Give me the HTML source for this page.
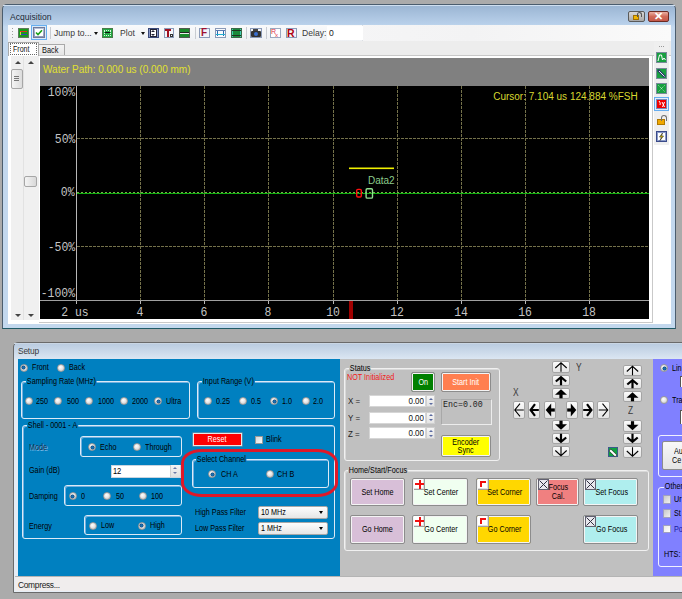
<!DOCTYPE html>
<html><head><meta charset="utf-8">
<style>
*{box-sizing:border-box;margin:0;padding:0}
html,body{width:682px;height:599px;overflow:hidden;background:#ababab;font-family:"Liberation Sans",sans-serif}
.a{position:absolute}
.t{position:absolute;white-space:nowrap;line-height:1}
/* setup condensed text */
.s{position:absolute;white-space:nowrap;line-height:1;font-size:8.6px;color:#000;transform:scaleX(0.84);transform-origin:0 0}
.sc{transform-origin:50% 0}
.grp{position:absolute;border:1px solid #e8f0f8;border-radius:3px}
.gt{position:absolute;white-space:nowrap;line-height:1;font-size:8.6px;padding:0 1px;transform:scaleX(0.84);transform-origin:0 0}
.rad{position:absolute;width:8px;height:8px;border-radius:50%;background:radial-gradient(circle at 40% 35%,#fff 0,#e6e6e6 45%,#bdbdbd 100%);border:1px solid #9a9a9a}
.rad.on::after{content:"";position:absolute;left:1.5px;top:1.5px;width:3px;height:3px;border-radius:50%;background:#1a6fb0;box-shadow:0 0 0 0.5px #0a3f6f}
.btn{position:absolute;border:1px solid #8a8a8a;border-radius:2px;box-shadow:inset 1px 1px 0 #fff,inset -1px -1px 0 #dcdcdc}
.ab{position:absolute;border:1px solid #9c9c9c;border-radius:2px;background:linear-gradient(#fafafa,#e6e6e6)}
</style></head><body>

<!-- ================= ACQUISITION WINDOW ================= -->
<div class="a" style="left:2px;top:4px;width:674px;height:325px;border:1px solid #4b5d6e;border-bottom-color:#1f5a66;border-radius:5px 5px 0 0;background:linear-gradient(#9ab4d2 0,#b8d0ea 19px,#c3d8ee 22px,#c3d8ee 100%)"></div>
<div class="a" style="left:3px;top:5px;width:672px;height:1px;background:#cfdff0"></div>
<div class="t" style="left:10px;top:13px;font-size:8.6px;color:#1e2a36">Acquisition</div>
<!-- lock + close buttons -->
<div class="a" style="left:628px;top:11px;width:17px;height:11px;border:1px solid #5a5a5a;border-radius:2px;background:linear-gradient(#d8d8d8,#a8a8a8)"></div>
<div class="a" style="left:633px;top:15px;width:6px;height:5px;background:#f0b400;border:1px solid #a07000"></div>
<div class="a" style="left:637px;top:12px;width:5px;height:5px;border:1px solid #555;border-bottom:none;border-radius:3px 3px 0 0"></div>
<div class="a" style="left:648px;top:11px;width:21px;height:11px;border:1px solid #6b2a22;border-radius:2px;background:linear-gradient(#eab0a4,#d06a58 50%,#c4584a)"></div>
<div class="t" style="left:654px;top:11px;font-size:11px;font-weight:bold;color:#fff">&#x2715;</div>

<!-- client -->
<div class="a" style="left:8px;top:25px;width:663px;height:299px;background:#fff"></div>
<!-- toolbar strip -->
<div class="a" style="left:8px;top:25px;width:663px;height:16px;background:linear-gradient(90deg,#f2f2f3,#f6f6f7 40%,#f3f3f4 70%,#fafafa)"></div>
<div class="a" style="left:8px;top:25px;width:355px;height:16px;background:linear-gradient(#f9fafb,#eef0f3);border-right:1px solid #dcdfe3"></div>
<div class="a" style="left:8px;top:41px;width:663px;height:15px;background:#ededed"></div>

<!-- toolbar grip -->
<div class="a" style="left:12px;top:28px;width:1px;height:10px;background:repeating-linear-gradient(#a0a0a0 0 1px,transparent 1px 3px)"></div>
<!-- icon1 -->
<div class="a" style="left:18px;top:28px;width:11px;height:10px;border:1px solid #5c7a5c;background:#1a9a1a"></div>
<div class="a" style="left:20px;top:31px;width:7px;height:1px;background:#e03020"></div>
<div class="a" style="left:21px;top:34px;width:6px;height:1px;background:#3040c0"></div>
<div class="a" style="left:20px;top:32px;width:1px;height:3px;background:#e0e040"></div>
<!-- icon2 highlighted -->
<div class="a" style="left:31px;top:25px;width:16px;height:15px;border:1px solid #66aef0;background:#dbeaf8"></div>
<div class="a" style="left:33px;top:27px;width:12px;height:11px;border:1px solid #707a9a;background:linear-gradient(#b9c3d8,#8e99b8)"></div>
<div class="a" style="left:35px;top:29px;width:8px;height:7px;background:#fff"></div>
<svg class="a" style="left:35px;top:29px" width="8" height="7"><path d="M1 3.5 L3 5.5 L7 1.2" stroke="#18a018" stroke-width="1.6" fill="none"/></svg>
<div class="a" style="left:50px;top:27px;width:1px;height:12px;background:#c8ccd2"></div>
<div class="t" style="left:54px;top:29px;font-size:8.6px;color:#3a3a3a">Jump to...</div>
<div class="a" style="left:94px;top:32px;width:0;height:0;border-left:2.5px solid transparent;border-right:2.5px solid transparent;border-top:3px solid #111"></div>
<!-- icon green dotted frame -->
<div class="a" style="left:102px;top:28px;width:11px;height:10px;border:1px solid #4a7a4a;background:#22aa44"></div>
<div class="a" style="left:104px;top:30px;width:7px;height:6px;border:1px dotted #dff5df"></div>
<div class="a" style="left:105px;top:32px;width:5px;height:1px;background:#111"></div>
<div class="t" style="left:120px;top:29px;font-size:8.6px;color:#3a3a3a">Plot</div>
<div class="a" style="left:141px;top:32px;width:0;height:0;border-left:2.5px solid transparent;border-right:2.5px solid transparent;border-top:3px solid #111"></div>
<!-- blue up/down -->
<div class="a" style="left:148px;top:28px;width:11px;height:10px;border:1px solid #3a4a7a;background:#8898c8"></div>
<div class="a" style="left:150px;top:29px;width:7px;height:8px;background:#fff;border:1px solid #223"></div>
<div class="a" style="left:151px;top:30px;width:0;height:0;border-left:2.5px solid transparent;border-right:2.5px solid transparent;border-bottom:2px solid #223"></div>
<div class="a" style="left:151px;top:34px;width:0;height:0;border-left:2.5px solid transparent;border-right:2.5px solid transparent;border-top:2px solid #223"></div>
<!-- T icon -->
<div class="a" style="left:164px;top:28px;width:10px;height:10px;border:1px solid #8a9ab8;background:#f4f6fa"></div>
<div class="a" style="left:165px;top:29px;width:6px;height:2px;background:#a01020"></div>
<div class="a" style="left:167px;top:29px;width:2px;height:8px;background:#a01020"></div>
<div class="a" style="left:170px;top:34px;width:3px;height:3px;border:1px solid #333"></div>
<!-- green stripes -->
<div class="a" style="left:179px;top:28px;width:11px;height:10px;border:1px solid #505a50;background:#e8f0e8"></div>
<div class="a" style="left:180px;top:29px;width:9px;height:3px;background:#1a8a2a"></div>
<div class="a" style="left:180px;top:34px;width:9px;height:3px;background:#1a8a2a"></div>
<div class="a" style="left:180px;top:32px;width:9px;height:1px;background:#222"></div>
<div class="a" style="left:195px;top:27px;width:1px;height:12px;background:#c8ccd2"></div>
<!-- F icon -->
<div class="a" style="left:199px;top:28px;width:11px;height:10px;border:1px solid #8a9ab8;background:#f2f4f8"></div>
<div class="t" style="left:201px;top:28px;font-size:10px;font-weight:bold;color:#a01030">F</div>
<!-- blue frame -->
<div class="a" style="left:215px;top:28px;width:11px;height:10px;border:1px solid #8a9ab8;background:#f8fafc"></div>
<div class="a" style="left:217px;top:30px;width:7px;height:6px;border-left:1px solid #2a6ab0;border-right:1px solid #2a6ab0"></div>
<div class="a" style="left:216px;top:34px;width:9px;height:1px;background:#20b0d0"></div>
<div class="a" style="left:216px;top:30px;width:9px;height:1px;background:#5a7ab0"></div>
<!-- green grid -->
<div class="a" style="left:231px;top:28px;width:11px;height:10px;border:1px solid #3a6a4a;background:#1a8a3a"></div>
<div class="a" style="left:232px;top:29px;width:9px;height:8px;border:1px solid #40d0b0;border-width:0 1px"></div>
<div class="a" style="left:232px;top:30px;width:9px;height:6px;border:1px solid #203020;border-width:1px 0"></div>
<div class="a" style="left:246px;top:27px;width:1px;height:12px;background:#c8ccd2"></div>
<!-- camera -->
<div class="a" style="left:250px;top:28px;width:12px;height:10px;border:1px solid #8a9ab8;background:#eef1f6"></div>
<div class="a" style="left:251px;top:31px;width:10px;height:6px;background:#333;border-radius:1px"></div>
<div class="a" style="left:253px;top:29px;width:5px;height:2px;background:#444"></div>
<div class="a" style="left:254px;top:32px;width:4px;height:4px;border-radius:50%;background:#3a70d0"></div>
<div class="a" style="left:266px;top:27px;width:1px;height:12px;background:#c8ccd2"></div>
<!-- Rx -->
<div class="a" style="left:270px;top:28px;width:11px;height:10px;border:1px solid #9aa8c0;background:#fff"></div>
<div class="t" style="left:271px;top:28px;font-size:7px;color:#e03040">R</div>
<div class="t" style="left:275px;top:32px;font-size:6px;color:#e03040">x</div>
<!-- R -->
<div class="a" style="left:286px;top:28px;width:11px;height:10px;border:1px solid #8a9ab8;background:#f2f4f8"></div>
<div class="t" style="left:287px;top:28px;font-size:10.5px;font-weight:bold;color:#b00010">R</div>
<div class="t" style="left:302px;top:29px;font-size:8.6px;color:#3a3a3a">Delay:</div>
<div class="a" style="left:327px;top:26px;width:36px;height:14px;background:#fff"></div>
<div class="t" style="left:329px;top:29px;font-size:8.6px;color:#222">0</div>

<!-- tabs -->
<div class="a" style="left:8px;top:55px;width:663px;height:1px;background:#c9c9c9"></div>
<div class="a" style="left:38px;top:44px;width:27px;height:12px;border:1px solid #a9a9a9;border-bottom:none;background:linear-gradient(#f4f4f4,#e4e4e4)"></div>
<div class="t" style="left:42px;top:45.5px;font-size:8.8px;color:#111;transform:scaleX(0.84);transform-origin:0 0">Back</div>
<div class="a" style="left:8px;top:42px;width:31px;height:14px;border:1px solid #a9a9a9;border-bottom:none;background:#fff"></div>
<div class="a" style="left:10px;top:43px;width:27px;height:12px;border:1px dotted #6a6a6a"></div>
<div class="t" style="left:13px;top:45px;font-size:8.8px;color:#111;transform:scaleX(0.8);transform-origin:0 0">Front</div>

<!-- scroll columns -->
<div class="a" style="left:8px;top:56px;width:32px;height:265px;background:#fff"></div>
<div class="a" style="left:11px;top:56px;width:13px;height:264px;background:#f0f0f0;border-right:1px solid #e2e2e2"></div>
<div class="a" style="left:24px;top:56px;width:15px;height:264px;background:#f0f0f0"></div>
<div class="a" style="left:15px;top:61px;width:0;height:0;border-left:3px solid transparent;border-right:3px solid transparent;border-bottom:3px solid #444"></div>
<div class="a" style="left:28px;top:61px;width:0;height:0;border-left:3px solid transparent;border-right:3px solid transparent;border-bottom:3px solid #444"></div>
<div class="a" style="left:15px;top:314px;width:0;height:0;border-left:3px solid transparent;border-right:3px solid transparent;border-top:3px solid #444"></div>
<div class="a" style="left:28px;top:314px;width:0;height:0;border-left:3px solid transparent;border-right:3px solid transparent;border-top:3px solid #444"></div>
<div class="a" style="left:11px;top:69px;width:12px;height:20px;border:1px solid #a6a6a6;border-radius:2px;background:linear-gradient(90deg,#f4f4f4,#dcdcdc)"></div>
<div class="a" style="left:14px;top:76px;width:5px;height:6px;background:repeating-linear-gradient(#777 0 1px,transparent 1px 2px)"></div>
<div class="a" style="left:24px;top:176px;width:13px;height:11px;border:1px solid #a6a6a6;border-radius:2px;background:linear-gradient(90deg,#f4f4f4,#d8d8d8)"></div>

<!-- plot frame -->
<div class="a" style="left:39px;top:55px;width:614px;height:268px;border:1px solid #c9c9c9;border-left:none;background:#fff"></div>
<div class="a" style="left:40px;top:58px;width:609px;height:28px;background:#808080"></div>
<div class="a" style="left:40px;top:86px;width:609px;height:233px;background:#000;overflow:hidden">
 <svg width="609" height="233" style="position:absolute;left:0;top:0">
  <g stroke="#74714a" stroke-width="1" stroke-dasharray="3,1">
   <line x1="100.5" y1="0" x2="100.5" y2="214"/>
   <line x1="164.5" y1="0" x2="164.5" y2="214"/>
   <line x1="228.5" y1="0" x2="228.5" y2="214"/>
   <line x1="293.5" y1="0" x2="293.5" y2="214"/>
   <line x1="357.5" y1="0" x2="357.5" y2="214"/>
   <line x1="421.5" y1="0" x2="421.5" y2="214"/>
   <line x1="485.5" y1="0" x2="485.5" y2="214"/>
   <line x1="549.5" y1="0" x2="549.5" y2="214"/>
   <line x1="37" y1="52.5" x2="609" y2="52.5"/>
   <line x1="37" y1="160.5" x2="609" y2="160.5"/>
  </g>
  <line x1="37" y1="106.5" x2="609" y2="106.5" stroke="#78b048" stroke-width="1" stroke-dasharray="2,2"/>
  <line x1="37" y1="107.5" x2="609" y2="107.5" stroke="#10b010" stroke-width="1"/>
  <line x1="36.5" y1="0" x2="36.5" y2="215" stroke="#b8b8b8" stroke-width="1"/>
  <line x1="0" y1="214.5" x2="609" y2="214.5" stroke="#a0a0a0" stroke-width="1"/>
  <g stroke="#b8b8b8" stroke-width="1">
   <line x1="36.5" y1="215" x2="36.5" y2="218"/>
   <line x1="100.5" y1="215" x2="100.5" y2="218"/>
   <line x1="164.5" y1="215" x2="164.5" y2="218"/>
   <line x1="228.5" y1="215" x2="228.5" y2="218"/>
   <line x1="293.5" y1="215" x2="293.5" y2="218"/>
   <line x1="357.5" y1="215" x2="357.5" y2="218"/>
   <line x1="421.5" y1="215" x2="421.5" y2="218"/>
   <line x1="485.5" y1="215" x2="485.5" y2="218"/>
   <line x1="549.5" y1="215" x2="549.5" y2="218"/>
  </g>
  <rect x="309" y="215" width="4" height="18" fill="#a00000"/>
  <rect x="309" y="81.5" width="45" height="1.6" fill="#f0f000"/>
  <rect x="316.7" y="103.4" width="4.6" height="7.6" rx="1.2" fill="none" stroke="#ff1010" stroke-width="1.4"/>
  <rect x="326.1" y="102.80000000000001" width="6.4" height="9.3" rx="1.2" fill="none" stroke="#90e090" stroke-width="1.4"/>
 </svg>
 <div class="t" style="left:328px;top:89.5px;font-size:10px;color:#8ccc8c">Data2</div>
 <div class="t" style="left:453.2px;top:5.799999999999997px;font-size:10px;color:#d8d830">Cursor: 7.104 us 124.884 %FSH</div>
 <div class="t" style="font-family:'Liberation Mono',monospace;font-size:13px;color:#c4c4c4;transform:scaleX(0.88);transform-origin:100% 0;right:574px;top:0.4px">100%</div>
 <div class="t" style="font-family:'Liberation Mono',monospace;font-size:13px;color:#c4c4c4;transform:scaleX(0.88);transform-origin:100% 0;right:574px;top:46.7px">50%</div>
 <div class="t" style="font-family:'Liberation Mono',monospace;font-size:13px;color:#c4c4c4;transform:scaleX(0.88);transform-origin:100% 0;right:574px;top:99.5px">0%</div>
 <div class="t" style="font-family:'Liberation Mono',monospace;font-size:13px;color:#c4c4c4;transform:scaleX(0.88);transform-origin:100% 0;right:574px;top:154.7px">-50%</div>
 <div class="t" style="font-family:'Liberation Mono',monospace;font-size:13px;color:#c4c4c4;transform:scaleX(0.88);transform-origin:100% 0;right:574px;top:200.5px">-100%</div>
 <div class="t" style="font-family:'Liberation Mono',monospace;font-size:13px;color:#c4c4c4;transform:scaleX(0.88);transform-origin:50% 0;left:-24.8px;width:120px;text-align:center;top:219.9px">2 us</div>
 <div class="t" style="font-family:'Liberation Mono',monospace;font-size:13px;color:#c4c4c4;transform:scaleX(0.88);transform-origin:50% 0;left:39.7px;width:120px;text-align:center;top:219.9px">4</div>
 <div class="t" style="font-family:'Liberation Mono',monospace;font-size:13px;color:#c4c4c4;transform:scaleX(0.88);transform-origin:50% 0;left:103.7px;width:120px;text-align:center;top:219.9px">6</div>
 <div class="t" style="font-family:'Liberation Mono',monospace;font-size:13px;color:#c4c4c4;transform:scaleX(0.88);transform-origin:50% 0;left:167.7px;width:120px;text-align:center;top:219.9px">8</div>
 <div class="t" style="font-family:'Liberation Mono',monospace;font-size:13px;color:#c4c4c4;transform:scaleX(0.88);transform-origin:50% 0;left:232.7px;width:120px;text-align:center;top:219.9px">10</div>
 <div class="t" style="font-family:'Liberation Mono',monospace;font-size:13px;color:#c4c4c4;transform:scaleX(0.88);transform-origin:50% 0;left:296.7px;width:120px;text-align:center;top:219.9px">12</div>
 <div class="t" style="font-family:'Liberation Mono',monospace;font-size:13px;color:#c4c4c4;transform:scaleX(0.88);transform-origin:50% 0;left:360.7px;width:120px;text-align:center;top:219.9px">14</div>
 <div class="t" style="font-family:'Liberation Mono',monospace;font-size:13px;color:#c4c4c4;transform:scaleX(0.88);transform-origin:50% 0;left:424.7px;width:120px;text-align:center;top:219.9px">16</div>
 <div class="t" style="font-family:'Liberation Mono',monospace;font-size:13px;color:#c4c4c4;transform:scaleX(0.88);transform-origin:50% 0;left:488.7px;width:120px;text-align:center;top:219.9px">18</div>
</div>
<div class="t" style="left:43px;top:64.5px;font-size:10px;color:#e0e030">Water Path: 0.000 us (0.000 mm)</div>

<!-- right toolbar -->
<div class="a" style="left:654px;top:42px;width:15px;height:103px;background:#efefef"></div>
<div class="a" style="left:659px;top:46px;width:6px;height:1px;background:repeating-linear-gradient(90deg,#999 0 1px,transparent 1px 2px)"></div>


<!-- right toolbar icons -->
<div class="a" style="left:656px;top:52px;width:11px;height:11px;border:1px solid #7a8a9a;background:#18a040"></div>
<svg class="a" style="left:656px;top:52px" width="11" height="11"><path d="M2 9 L3.5 3 L5.5 3 L6.5 8 L8 6 L9.5 8" stroke="#fff" stroke-width="1" fill="none"/></svg>
<div class="a" style="left:656px;top:67.5px;width:11px;height:11px;border:1px solid #7a8a9a;background:#18a040"></div>
<svg class="a" style="left:656px;top:67.5px" width="11" height="11"><path d="M2 2 L9 9" stroke="#2a3a6a" stroke-width="2.5"/><path d="M3 3 L8.5 8.5" stroke="#e8e8f0" stroke-width="1"/></svg>
<div class="a" style="left:656px;top:83px;width:11px;height:11px;border:1px solid #7a8a9a;background:#18a040"></div>
<svg class="a" style="left:656px;top:83px" width="11" height="11"><path d="M2.5 2.5 L8.5 8.5 M8.5 2.5 L2.5 8.5" stroke="#c8f0c8" stroke-width="1" stroke-dasharray="1,1"/></svg>
<div class="a" style="left:654px;top:97px;width:15px;height:14px;border:1px solid #66aef0;background:#e4eefa"></div>
<div class="a" style="left:656px;top:99px;width:11px;height:10px;border:1px solid #7a8ab8;background:#f00000"></div>
<svg class="a" style="left:656px;top:99px" width="11" height="10"><path d="M3 2 Q5 4 4 6 M6 3 L8.5 8 M6.5 8 L8.5 3" stroke="#fff" stroke-width="1" fill="none"/></svg>
<div class="a" style="left:657px;top:119px;width:8px;height:6px;background:#f0a800;border:1px solid #b07800"></div>
<div class="a" style="left:661px;top:114.5px;width:6px;height:6px;border:1.5px solid #707070;border-bottom:none;border-radius:3px 3px 0 0"></div>
<div class="a" style="left:656px;top:130.5px;width:11px;height:11px;border:1px solid #3a4a8a;background:#fff;box-shadow:inset 0 0 0 1px #8a9ac8"></div>
<svg class="a" style="left:656px;top:130.5px" width="11" height="11"><path d="M6.5 2 L3.5 6 L5.5 6 L4 9.5 L7.5 5 L5.5 5 Z" fill="#f0d000" stroke="#222" stroke-width="0.6"/></svg>
<!-- ================= SETUP WINDOW ================= -->
<div class="a" style="left:13px;top:342px;width:680px;height:251px;border:1px solid #6a6a6a;border-radius:5px 5px 0 0;background:linear-gradient(#b8cadf 0,#dbe6f2 16px,#e4ecf5 17px,#e4ecf5 100%)"></div>
<div class="a" style="left:14px;top:343px;width:668px;height:1px;background:#c9d6e4"></div>
<div class="t" style="left:18px;top:347px;font-size:8.4px;letter-spacing:-0.2px;color:#3a3a3a">Setup</div>
<!-- status bar -->
<div class="a" style="left:15px;top:576px;width:667px;height:15px;background:#f0eded;border-top:1px solid #b4b4b4"></div>
<div class="a" style="left:14px;top:591px;width:668px;height:1px;background:#e6eef6"></div>
<div class="t" style="left:18px;top:580.5px;font-size:8.4px;letter-spacing:-0.3px;color:#222">Compress...</div>
<!-- panels -->
<div class="a" style="left:18px;top:359px;width:322px;height:217px;background:#0080c0"></div>
<div class="a" style="left:340px;top:359px;width:313px;height:217px;background:#c0c0c0"></div>
<div class="a" style="left:653px;top:359px;width:29px;height:217px;background:#8080ff"></div>
<!-- blue panel content -->
<div class="rad on" style="left:19.9px;top:363.9px"></div>
<div class="s" style="left:31.7px;top:363.4px;">Front</div>
<div class="rad" style="left:56.6px;top:363.9px"></div>
<div class="s" style="left:68.6px;top:363.4px;">Back</div>
<div class="grp" style="left:21.0px;top:380.5px;width:169.4px;height:38.1px;border-color:#dceaf6;box-shadow:inset 1px 1px 0 #6fb0e0"></div>
<div class="gt" style="left:25.9px;top:376.8px;background:#0080c0">Sampling Rate (MHz)</div>
<div class="rad" style="left:24.6px;top:397.2px"></div>
<div class="s" style="left:36.4px;top:396.8px;">250</div>
<div class="rad" style="left:54.4px;top:397.2px"></div>
<div class="s" style="left:66.5px;top:396.8px;">500</div>
<div class="rad" style="left:85.2px;top:397.2px"></div>
<div class="s" style="left:97.5px;top:396.8px;">1000</div>
<div class="rad" style="left:119.9px;top:397.2px"></div>
<div class="s" style="left:132.0px;top:396.8px;">2000</div>
<div class="rad on" style="left:154.2px;top:397.2px"></div>
<div class="s" style="left:166.0px;top:396.8px;">Ultra</div>
<div class="grp" style="left:196.8px;top:380.5px;width:137.8px;height:38.4px;border-color:#dceaf6;box-shadow:inset 1px 1px 0 #6fb0e0"></div>
<div class="gt" style="left:201.5px;top:376.8px;background:#0080c0">Input Range (V)</div>
<div class="rad" style="left:203.7px;top:397.4px"></div>
<div class="s" style="left:216.0px;top:397.0px;">0.25</div>
<div class="rad" style="left:239.4px;top:397.4px"></div>
<div class="s" style="left:251.0px;top:397.0px;">0.5</div>
<div class="rad on" style="left:270.0px;top:397.4px"></div>
<div class="s" style="left:282.0px;top:397.0px;">1.0</div>
<div class="rad" style="left:301.5px;top:397.4px"></div>
<div class="s" style="left:313.2px;top:397.0px;">2.0</div>
<div class="grp" style="left:21.6px;top:425.0px;width:313.3px;height:114.2px;border-color:#dceaf6;box-shadow:inset 1px 1px 0 #6fb0e0"></div>
<div class="gt" style="left:26.9px;top:421.3px;background:#0080c0">Shell - 0001 - A</div>
<div class="s" style="left:28.9px;top:442.8px;color:#15324e;text-shadow:1px 1px 0 #86bce6">Mode</div>
<div class="grp" style="left:80.3px;top:435.5px;width:101.7px;height:21.3px;border-color:#dceaf6;box-shadow:inset 1px 1px 0 #6fb0e0"></div>
<div class="rad on" style="left:88.1px;top:443.0px"></div>
<div class="s" style="left:99.6px;top:442.8px;">Echo</div>
<div class="rad" style="left:133.0px;top:443.0px"></div>
<div class="s" style="left:145.4px;top:442.8px;">Through</div>
<div class="s" style="left:28.9px;top:465.8px;">Gain (dB)</div>
<div class="a" style="left:110.5px;top:464.5px;width:70px;height:13px;background:#fff;border:1px solid #c8d4e0"></div>
<div class="s" style="left:112.5px;top:466.8px;font-size:9px;letter-spacing:-0.3px">12</div>
<div class="a" style="left:170px;top:465px;width:10px;height:12px;background:linear-gradient(#f4f4f4,#e0e0e0);border-left:1px solid #d0d0d0"></div>
<div class="a" style="left:173px;top:467px;border-left:2px solid transparent;border-right:2px solid transparent;border-bottom:2px solid #6a7aa8"></div>
<div class="a" style="left:173px;top:472px;border-left:2px solid transparent;border-right:2px solid transparent;border-top:2px solid #6a7aa8"></div>
<div class="s" style="left:28.7px;top:491.8px;">Damping</div>
<div class="grp" style="left:63.8px;top:485.1px;width:117.9px;height:21.3px;border-color:#dceaf6;box-shadow:inset 1px 1px 0 #6fb0e0"></div>
<div class="rad on" style="left:68.5px;top:492.0px"></div>
<div class="s" style="left:81.0px;top:491.8px;">0</div>
<div class="rad" style="left:103.3px;top:492.0px"></div>
<div class="s" style="left:115.8px;top:491.8px;">50</div>
<div class="rad" style="left:139.0px;top:492.0px"></div>
<div class="s" style="left:150.9px;top:491.8px;">100</div>
<div class="s" style="left:28.7px;top:521.5px;">Energy</div>
<div class="grp" style="left:84.1px;top:514.5px;width:97.6px;height:20.7px;border-color:#dceaf6;box-shadow:inset 1px 1px 0 #6fb0e0"></div>
<div class="rad" style="left:89.4px;top:521.5px"></div>
<div class="s" style="left:100.8px;top:521.3px;">Low</div>
<div class="rad on" style="left:137.6px;top:521.5px"></div>
<div class="s" style="left:149.6px;top:521.3px;">High</div>
<div class="a" style="left:192.5px;top:432.5px;width:49px;height:13px;background:#ff0000;border:1px solid #e8e8e8;box-shadow:0 0 0 0.5px #9a9a9a"></div>
<div class="s" style="left:193px;width:48px;text-align:center;transform-origin:50% 0;top:434.8px;color:#fff">Reset</div>
<div class="a" style="left:254.5px;top:435.5px;width:8.5px;height:8.5px;background:linear-gradient(135deg,#d8d8d8,#fafafa);border:1px solid #9a9a9a"></div>
<div class="s" style="left:266.0px;top:435.3px;">Blink</div>
<div class="grp" style="left:192.0px;top:458.9px;width:136.6px;height:28.9px;border-color:#dceaf6;box-shadow:inset 1px 1px 0 #6fb0e0"></div>
<div class="gt" style="left:196.4px;top:455.2px;background:#0080c0">Select Channel</div>
<div class="rad on" style="left:208.4px;top:470.4px"></div>
<div class="s" style="left:220.6px;top:470.2px;">CH A</div>
<div class="rad" style="left:265.8px;top:470.4px"></div>
<div class="s" style="left:277.0px;top:470.2px;">CH B</div>
<div class="a" style="left:180.5px;top:448.5px;width:157px;height:48px;border:3px solid #e01828;border-radius:21px/14px"></div>
<div class="s" style="left:194.9px;top:507.7px;">High Pass Filter</div>
<div class="s" style="left:194.9px;top:523.7px;">Low Pass Filter</div>
<div class="a" style="left:257.5px;top:505.5px;width:70px;height:13px;background:linear-gradient(#fdfdfd,#e6e6e6);border:1px solid #a8a8a8;border-radius:2px"></div>
<div class="s" style="left:260.5px;top:507.9px;">10 MHz</div>
<div class="a" style="left:319px;top:510.5px;border-left:2.5px solid transparent;border-right:2.5px solid transparent;border-top:3px solid #000"></div>
<div class="a" style="left:257.5px;top:522px;width:70px;height:13px;background:linear-gradient(#fdfdfd,#e6e6e6);border:1px solid #a8a8a8;border-radius:2px"></div>
<div class="s" style="left:260.5px;top:524.4px;">1 MHz</div>
<div class="a" style="left:319px;top:527px;border-left:2.5px solid transparent;border-right:2.5px solid transparent;border-top:3px solid #000"></div>
<!-- gray panel content -->
<div class="grp" style="left:343.7px;top:368.0px;width:156.1px;height:93.0px;border-color:#f0f0f0;box-shadow:inset 1px 1px 0 #d8d8d8"></div>
<div class="gt" style="left:348.9px;top:364.3px;background:#c0c0c0">Status</div>
<div class="s" style="left:346.8px;top:373.1px;color:#f01818">NOT Initialized</div>
<div class="a" style="left:410.9px;top:371.7px;width:24.6px;height:20.7px;border:1px solid #8c8c8c;border-radius:2px;background:#008000;box-shadow:inset 0 0 0 1px #f4f4f4"></div>
<div class="s sc" style="left:410.9px;width:24.6px;text-align:center;top:377.8px;color:#fff">On</div>
<div class="a" style="left:441.4px;top:371.7px;width:49.3px;height:20.7px;border:1px solid #8c8c8c;border-radius:2px;background:#ff7f50;box-shadow:inset 0 0 0 1px #f4f4f4"></div>
<div class="s sc" style="left:441.4px;width:49.3px;text-align:center;top:377.8px;color:#fff">Start Init</div>
<div class="s" style="left:347.5px;top:396.4px;font-size:9.5px;letter-spacing:0px;color:#222">X =</div>
<div class="a" style="left:368.6px;top:395.2px;width:57.1px;height:11.8px;background:#fff;border:1px solid #d6d6d6"></div>
<div class="s" style="left:380px;width:44px;text-align:right;transform-origin:100% 0;top:396.2px;font-size:9.5px;color:#111">0.00</div>
<div class="a" style="left:425.7px;top:395.2px;width:9.8px;height:11.8px;background:linear-gradient(#f6f6f6,#e4e4e4);border:1px solid #d0d0d0"></div>
<div class="a" style="left:428.5px;top:397.7px;border-left:2px solid transparent;border-right:2px solid transparent;border-bottom:2px solid #5a6aa0"></div>
<div class="a" style="left:428.5px;top:402.5px;border-left:2px solid transparent;border-right:2px solid transparent;border-top:2px solid #5a6aa0"></div>
<div class="s" style="left:347.5px;top:412.8px;font-size:9.5px;letter-spacing:0px;color:#222">Y =</div>
<div class="a" style="left:368.6px;top:411.6px;width:57.1px;height:12.2px;background:#fff;border:1px solid #d6d6d6"></div>
<div class="s" style="left:380px;width:44px;text-align:right;transform-origin:100% 0;top:412.6px;font-size:9.5px;color:#111">0.00</div>
<div class="a" style="left:425.7px;top:411.6px;width:9.8px;height:12.2px;background:linear-gradient(#f6f6f6,#e4e4e4);border:1px solid #d0d0d0"></div>
<div class="a" style="left:428.5px;top:414.1px;border-left:2px solid transparent;border-right:2px solid transparent;border-bottom:2px solid #5a6aa0"></div>
<div class="a" style="left:428.5px;top:419.3px;border-left:2px solid transparent;border-right:2px solid transparent;border-top:2px solid #5a6aa0"></div>
<div class="s" style="left:347.5px;top:428.6px;font-size:9.5px;letter-spacing:0px;color:#222">Z =</div>
<div class="a" style="left:368.6px;top:427.0px;width:57.1px;height:12.3px;background:#fff;border:1px solid #d6d6d6"></div>
<div class="s" style="left:380px;width:44px;text-align:right;transform-origin:100% 0;top:428.4px;font-size:9.5px;color:#111">0.00</div>
<div class="a" style="left:425.7px;top:427.0px;width:9.8px;height:12.3px;background:linear-gradient(#f6f6f6,#e4e4e4);border:1px solid #d0d0d0"></div>
<div class="a" style="left:428.5px;top:429.5px;border-left:2px solid transparent;border-right:2px solid transparent;border-bottom:2px solid #5a6aa0"></div>
<div class="a" style="left:428.5px;top:434.8px;border-left:2px solid transparent;border-right:2px solid transparent;border-top:2px solid #5a6aa0"></div>
<div class="a" style="left:440.5px;top:399.4px;width:51.4px;height:26px;border:1px solid;border-color:#a8a8a8 #ececec #ececec #a8a8a8"></div>
<div class="t" style="left:443px;top:401px;font-family:'Liberation Mono',monospace;font-size:8.3px;color:#222">Enc=0.00</div>
<div class="a" style="left:441.4px;top:435.1px;width:49.3px;height:21.6px;border:1px solid #8c8c8c;border-radius:2px;background:#ffff00;box-shadow:inset 0 0 0 1px #f4f4f4"></div>
<div class="s sc" style="left:441.4px;width:49.3px;text-align:center;top:438.1px;">Encoder</div>
<div class="s sc" style="left:441.4px;width:49.3px;text-align:center;top:446.1px;">Sync</div>
<div class="grp" style="left:343.5px;top:470.0px;width:305.2px;height:80.9px;border-color:#f0f0f0;box-shadow:inset 1px 1px 0 #d8d8d8"></div>
<div class="gt" style="left:348.4px;top:466.3px;background:#c0c0c0">Home/Start/Focus</div>
<div class="a" style="left:350.1px;top:477.6px;width:54.9px;height:28.9px;border:1px solid #8c8c8c;border-radius:2px;background:#d8bfd8;box-shadow:inset 0 0 0 1px #f4f4f4"></div>
<div class="s sc" style="left:350.1px;width:54.9px;text-align:center;top:487.9px;">Set Home</div>
<div class="a" style="left:412.3px;top:477.6px;width:55.7px;height:28.9px;border:1px solid #8c8c8c;border-radius:2px;background:#f0fff0;box-shadow:inset 0 0 0 1px #f4f4f4"></div>
<div class="a" style="left:414.0px;top:479.1px;width:11px;height:11px;background:#fff;border:1px solid #a0a0a0;border-width:0 1px 1px 0;box-shadow:inset -1px -1px 0 #e0e0e0"></div>
<div class="a" style="left:415.0px;top:483.1px;width:9px;height:2px;background:#f01010"></div>
<div class="a" style="left:418.5px;top:479.6px;width:2px;height:9px;background:#f01010"></div>
<div class="s sc" style="left:414.0px;width:54.0px;text-align:center;top:487.9px;">Set Center</div>
<div class="a" style="left:476.1px;top:477.6px;width:55.2px;height:28.9px;border:1px solid #8c8c8c;border-radius:2px;background:#ffd700;box-shadow:inset 0 0 0 1px #f4f4f4"></div>
<div class="a" style="left:477.8px;top:479.1px;width:11px;height:11px;background:#fff;border:1px solid #a0a0a0;border-width:0 1px 1px 0;box-shadow:inset -1px -1px 0 #e0e0e0"></div>
<div class="a" style="left:479.8px;top:481.1px;width:6px;height:6px;border-left:2px solid #f01010;border-top:2px solid #f01010"></div>
<div class="s sc" style="left:478.0px;width:53.3px;text-align:center;top:487.9px;">Set Corner</div>
<div class="a" style="left:582.8px;top:477.6px;width:55.7px;height:28.9px;border:1px solid #8c8c8c;border-radius:2px;background:#afeeee;box-shadow:inset 0 0 0 1px #f4f4f4"></div>
<div class="a" style="left:584.5px;top:479.1px;width:11px;height:11px;background:#fff;border:1px solid #a0a0a0;border-width:0 1px 1px 0;box-shadow:inset -1px -1px 0 #e0e0e0"></div>
<svg class="a" style="left:584.5px;top:479.1px" width="11" height="11"><rect x="0.5" y="0.5" width="10" height="10" fill="#e8e8ee" stroke="#606070"/><path d="M1.5 1.5L9.5 9.5M9.5 1.5L1.5 9.5" stroke="#303040" stroke-width="1"/></svg>
<div class="s sc" style="left:585.0px;width:53.5px;text-align:center;top:487.9px;">Set Focus</div>
<div class="a" style="left:350.1px;top:514.5px;width:54.9px;height:29.8px;border:1px solid #8c8c8c;border-radius:2px;background:#d8bfd8;box-shadow:inset 0 0 0 1px #f4f4f4"></div>
<div class="s sc" style="left:350.1px;width:54.9px;text-align:center;top:525.2px;">Go Home</div>
<div class="a" style="left:412.3px;top:514.5px;width:55.7px;height:29.8px;border:1px solid #8c8c8c;border-radius:2px;background:#f0fff0;box-shadow:inset 0 0 0 1px #f4f4f4"></div>
<div class="a" style="left:414.0px;top:516.0px;width:11px;height:11px;background:#fff;border:1px solid #a0a0a0;border-width:0 1px 1px 0;box-shadow:inset -1px -1px 0 #e0e0e0"></div>
<div class="a" style="left:415.0px;top:520.0px;width:9px;height:2px;background:#f01010"></div>
<div class="a" style="left:418.5px;top:516.5px;width:2px;height:9px;background:#f01010"></div>
<div class="s sc" style="left:414.0px;width:54.0px;text-align:center;top:525.2px;">Go Center</div>
<div class="a" style="left:476.1px;top:514.5px;width:55.2px;height:29.8px;border:1px solid #8c8c8c;border-radius:2px;background:#ffd700;box-shadow:inset 0 0 0 1px #f4f4f4"></div>
<div class="a" style="left:477.8px;top:516.0px;width:11px;height:11px;background:#fff;border:1px solid #a0a0a0;border-width:0 1px 1px 0;box-shadow:inset -1px -1px 0 #e0e0e0"></div>
<div class="a" style="left:479.8px;top:518.0px;width:6px;height:6px;border-left:2px solid #f01010;border-top:2px solid #f01010"></div>
<div class="s sc" style="left:478.0px;width:53.3px;text-align:center;top:525.2px;">Go Corner</div>
<div class="a" style="left:582.8px;top:514.5px;width:55.7px;height:29.8px;border:1px solid #8c8c8c;border-radius:2px;background:#afeeee;box-shadow:inset 0 0 0 1px #f4f4f4"></div>
<div class="a" style="left:584.5px;top:516.0px;width:11px;height:11px;background:#fff;border:1px solid #a0a0a0;border-width:0 1px 1px 0;box-shadow:inset -1px -1px 0 #e0e0e0"></div>
<svg class="a" style="left:584.5px;top:516.0px" width="11" height="11"><rect x="0.5" y="0.5" width="10" height="10" fill="#e8e8ee" stroke="#606070"/><path d="M1.5 1.5L9.5 9.5M9.5 1.5L1.5 9.5" stroke="#303040" stroke-width="1"/></svg>
<div class="s sc" style="left:585.0px;width:53.5px;text-align:center;top:525.2px;">Go Focus</div>
<div class="a" style="left:536.3px;top:477.6px;width:42.3px;height:28.9px;border:1px solid #8c8c8c;border-radius:2px;background:#f08080;box-shadow:inset 0 0 0 1px #f4f4f4"></div>
<div class="a" style="left:538.0px;top:479.1px;width:11px;height:11px;background:#fff;border:1px solid #a0a0a0;border-width:0 1px 1px 0;box-shadow:inset -1px -1px 0 #e0e0e0"></div>
<svg class="a" style="left:538.0px;top:479.1px" width="11" height="11"><rect x="0.5" y="0.5" width="10" height="10" fill="#e8e8ee" stroke="#606070"/><path d="M1.5 1.5L9.5 9.5M9.5 1.5L1.5 9.5" stroke="#303040" stroke-width="1"/></svg>
<div class="s sc" style="left:538.0px;width:40.6px;text-align:center;top:483.3px;">Focus</div>
<div class="s sc" style="left:538.0px;width:40.6px;text-align:center;top:491.8px;">Cal.</div>
<svg width="0" height="0" style="position:absolute"><defs><linearGradient id="ag" x1="0" y1="0" x2="0" y2="1"><stop offset="0" stop-color="#fcfcfc"/><stop offset="1" stop-color="#e2e2e2"/></linearGradient></defs></svg>
<svg class="a" style="left:552px;top:361px" width="18" height="12" viewBox="0 0 18 12"><rect x="0.5" y="0.5" width="17" height="11" rx="1.5" fill="url(#ag)" stroke="#a4a4a4"/><g transform="translate(9.0,6.0) rotate(0)"><path d="M-5.7 1 L0 -4.2 L5.7 1 M0 -4.2 L0 4.8" stroke="#000" stroke-width="1.1" fill="none"/></g></svg>
<svg class="a" style="left:552px;top:375px" width="18" height="11" viewBox="0 0 18 11"><rect x="0.5" y="0.5" width="17" height="10" rx="1.5" fill="url(#ag)" stroke="#a4a4a4"/><g transform="translate(9.0,5.5) rotate(0)"><path d="M-5.2 1 L0 -3.4 L5.2 1 M0 -3.6 L0 4.8" stroke="#000" stroke-width="2.2" fill="none"/></g></svg>
<svg class="a" style="left:552px;top:388px" width="18" height="11" viewBox="0 0 18 11"><rect x="0.5" y="0.5" width="17" height="10" rx="1.5" fill="url(#ag)" stroke="#a4a4a4"/><g transform="translate(9.0,5.5) rotate(0)"><path d="M-6.0 1.2 L0 -4.3 L6.0 1.2 Z" fill="#000"/><rect x="-1.6" y="0" width="3.2" height="4.8" fill="#000"/></g></svg>
<svg class="a" style="left:552px;top:420px" width="18" height="11" viewBox="0 0 18 11"><rect x="0.5" y="0.5" width="17" height="10" rx="1.5" fill="url(#ag)" stroke="#a4a4a4"/><g transform="translate(9.0,5.5) rotate(180)"><path d="M-6.0 1.2 L0 -4.3 L6.0 1.2 Z" fill="#000"/><rect x="-1.6" y="0" width="3.2" height="4.8" fill="#000"/></g></svg>
<svg class="a" style="left:552px;top:433px" width="18" height="11" viewBox="0 0 18 11"><rect x="0.5" y="0.5" width="17" height="10" rx="1.5" fill="url(#ag)" stroke="#a4a4a4"/><g transform="translate(9.0,5.5) rotate(180)"><path d="M-5.2 1 L0 -3.4 L5.2 1 M0 -3.6 L0 4.8" stroke="#000" stroke-width="2.2" fill="none"/></g></svg>
<svg class="a" style="left:552px;top:446px" width="18" height="11" viewBox="0 0 18 11"><rect x="0.5" y="0.5" width="17" height="10" rx="1.5" fill="url(#ag)" stroke="#a4a4a4"/><g transform="translate(9.0,5.5) rotate(180)"><path d="M-5.7 1 L0 -4.2 L5.7 1 M0 -4.2 L0 4.8" stroke="#000" stroke-width="1.1" fill="none"/></g></svg>
<svg class="a" style="left:513px;top:401px" width="12" height="18" viewBox="0 0 12 18"><rect x="0.5" y="0.5" width="11" height="17" rx="1.5" fill="url(#ag)" stroke="#a4a4a4"/><g transform="translate(6.0,9.0) rotate(-90)"><path d="M-6.3 1 L0 -4.2 L6.3 1 M0 -4.2 L0 4.8" stroke="#000" stroke-width="1.1" fill="none"/></g></svg>
<svg class="a" style="left:528px;top:401px" width="12" height="18" viewBox="0 0 12 18"><rect x="0.5" y="0.5" width="11" height="17" rx="1.5" fill="url(#ag)" stroke="#a4a4a4"/><g transform="translate(6.0,9.0) rotate(-90)"><path d="M-5.8 1 L0 -3.4 L5.8 1 M0 -3.6 L0 4.8" stroke="#000" stroke-width="2.2" fill="none"/></g></svg>
<svg class="a" style="left:544px;top:401px" width="12" height="18" viewBox="0 0 12 18"><rect x="0.5" y="0.5" width="11" height="17" rx="1.5" fill="url(#ag)" stroke="#a4a4a4"/><g transform="translate(6.0,9.0) rotate(-90)"><path d="M-6.6 1.2 L0 -4.3 L6.6 1.2 Z" fill="#000"/><rect x="-1.6" y="0" width="3.2" height="4.8" fill="#000"/></g></svg>
<svg class="a" style="left:566px;top:401px" width="12" height="18" viewBox="0 0 12 18"><rect x="0.5" y="0.5" width="11" height="17" rx="1.5" fill="url(#ag)" stroke="#a4a4a4"/><g transform="translate(6.0,9.0) rotate(90)"><path d="M-6.6 1.2 L0 -4.3 L6.6 1.2 Z" fill="#000"/><rect x="-1.6" y="0" width="3.2" height="4.8" fill="#000"/></g></svg>
<svg class="a" style="left:582px;top:401px" width="12" height="18" viewBox="0 0 12 18"><rect x="0.5" y="0.5" width="11" height="17" rx="1.5" fill="url(#ag)" stroke="#a4a4a4"/><g transform="translate(6.0,9.0) rotate(90)"><path d="M-5.8 1 L0 -3.4 L5.8 1 M0 -3.6 L0 4.8" stroke="#000" stroke-width="2.2" fill="none"/></g></svg>
<svg class="a" style="left:597px;top:401px" width="13" height="18" viewBox="0 0 13 18"><rect x="0.5" y="0.5" width="12" height="17" rx="1.5" fill="url(#ag)" stroke="#a4a4a4"/><g transform="translate(6.5,9.0) rotate(90)"><path d="M-6.3 1 L0 -4.2 L6.3 1 M0 -4.2 L0 4.8" stroke="#000" stroke-width="1.1" fill="none"/></g></svg>
<svg class="a" style="left:623px;top:365px" width="19" height="11" viewBox="0 0 19 11"><rect x="0.5" y="0.5" width="18" height="10" rx="1.5" fill="url(#ag)" stroke="#a4a4a4"/><g transform="translate(9.5,5.5) rotate(0)"><path d="M-5.7 1 L0 -4.2 L5.7 1 M0 -4.2 L0 4.8" stroke="#000" stroke-width="1.1" fill="none"/></g></svg>
<svg class="a" style="left:623px;top:378px" width="19" height="11" viewBox="0 0 19 11"><rect x="0.5" y="0.5" width="18" height="10" rx="1.5" fill="url(#ag)" stroke="#a4a4a4"/><g transform="translate(9.5,5.5) rotate(0)"><path d="M-5.2 1 L0 -3.4 L5.2 1 M0 -3.6 L0 4.8" stroke="#000" stroke-width="2.2" fill="none"/></g></svg>
<svg class="a" style="left:623px;top:391px" width="19" height="11" viewBox="0 0 19 11"><rect x="0.5" y="0.5" width="18" height="10" rx="1.5" fill="url(#ag)" stroke="#a4a4a4"/><g transform="translate(9.5,5.5) rotate(0)"><path d="M-6.0 1.2 L0 -4.3 L6.0 1.2 Z" fill="#000"/><rect x="-1.6" y="0" width="3.2" height="4.8" fill="#000"/></g></svg>
<svg class="a" style="left:623px;top:420px" width="19" height="12" viewBox="0 0 19 12"><rect x="0.5" y="0.5" width="18" height="11" rx="1.5" fill="url(#ag)" stroke="#a4a4a4"/><g transform="translate(9.5,6.0) rotate(180)"><path d="M-6.0 1.2 L0 -4.3 L6.0 1.2 Z" fill="#000"/><rect x="-1.6" y="0" width="3.2" height="4.8" fill="#000"/></g></svg>
<svg class="a" style="left:623px;top:433px" width="19" height="11" viewBox="0 0 19 11"><rect x="0.5" y="0.5" width="18" height="10" rx="1.5" fill="url(#ag)" stroke="#a4a4a4"/><g transform="translate(9.5,5.5) rotate(180)"><path d="M-5.2 1 L0 -3.4 L5.2 1 M0 -3.6 L0 4.8" stroke="#000" stroke-width="2.2" fill="none"/></g></svg>
<svg class="a" style="left:623px;top:446px" width="19" height="12" viewBox="0 0 19 12"><rect x="0.5" y="0.5" width="18" height="11" rx="1.5" fill="url(#ag)" stroke="#a4a4a4"/><g transform="translate(9.5,6.0) rotate(180)"><path d="M-5.7 1 L0 -4.2 L5.7 1 M0 -4.2 L0 4.8" stroke="#000" stroke-width="1.1" fill="none"/></g></svg>
<div class="s" style="left:575.5px;top:363.3px;font-size:10px;color:#3a3a3a">Y</div>
<div class="s" style="left:512.8px;top:388.1px;font-size:10px;color:#3a3a3a">X</div>
<div class="s" style="left:627.5px;top:405.8px;font-size:10px;color:#3a3a3a">Z</div>
<div class="a" style="left:607.6px;top:447.4px;width:10.2px;height:10.1px;background:#10a040;border:1px solid #3a5a8a"></div>
<div class="a" style="left:609px;top:451.5px;width:8px;height:2px;background:#fff;transform:rotate(45deg);box-shadow:0 0 0 0.5px #333"></div>
<div class="rad on" style="left:660.2px;top:364.3px"></div>
<div class="s" style="left:671.7px;top:364.3px;">Lin</div>
<div class="a" style="left:680px;top:376px;width:3px;height:11px;background:#fff;border-left:1px solid #555;border-top:1px solid #555"></div>
<div class="rad" style="left:660.2px;top:395.7px"></div>
<div class="s" style="left:671.7px;top:395.8px;">Tra</div>
<div class="a" style="left:680px;top:410px;width:3px;height:14px;background:#fff;border-left:1px solid #555;border-top:1px solid #555"></div>
<div class="a" style="left:657.5px;top:435px;width:40px;height:42px;border:1px solid #f0f0ff;border-radius:3px"></div>
<div class="a" style="left:661.7px;top:440.8px;width:40px;height:29.5px;border:1px solid #8c8c8c;border-radius:2px;background:linear-gradient(#f8f8f8,#e4e4e4)"></div>
<div class="s" style="left:673.5px;top:447.3px;">Au</div>
<div class="s" style="left:672.0px;top:456.3px;">Ce</div>
<div class="a" style="left:658px;top:487px;width:40px;height:80px;border:1px solid #f0f0ff;border-radius:3px"></div>
<div class="s" style="left:663.5px;top:481.8px;;background:#8080ff;padding:0 1px">Other</div>
<div class="a" style="left:663px;top:495.2px;width:8.3px;height:8.5px;border:1px solid #a0a0c0;background:linear-gradient(135deg,#c8c8c8,#f0f0f0)"></div>
<div class="s" style="left:674.3px;top:495.3px;;color:#000">Ur</div>
<div class="a" style="left:663px;top:509.2px;width:8.3px;height:8.5px;border:1px solid #a0a0c0;background:linear-gradient(135deg,#c8c8c8,#f0f0f0)"></div>
<div class="s" style="left:674.3px;top:509.3px;;color:#000">St</div>
<div class="a" style="left:663px;top:524.9px;width:8.3px;height:8.5px;border:1px solid #a0a0c0;background:linear-gradient(135deg,#e8e8e8,#fff)"></div>
<div class="s" style="left:674.3px;top:525.0px;;color:#1a1aa0">Po</div>
<div class="s" style="left:664.3px;top:549.6px;">HTS:</div>
</body></html>
